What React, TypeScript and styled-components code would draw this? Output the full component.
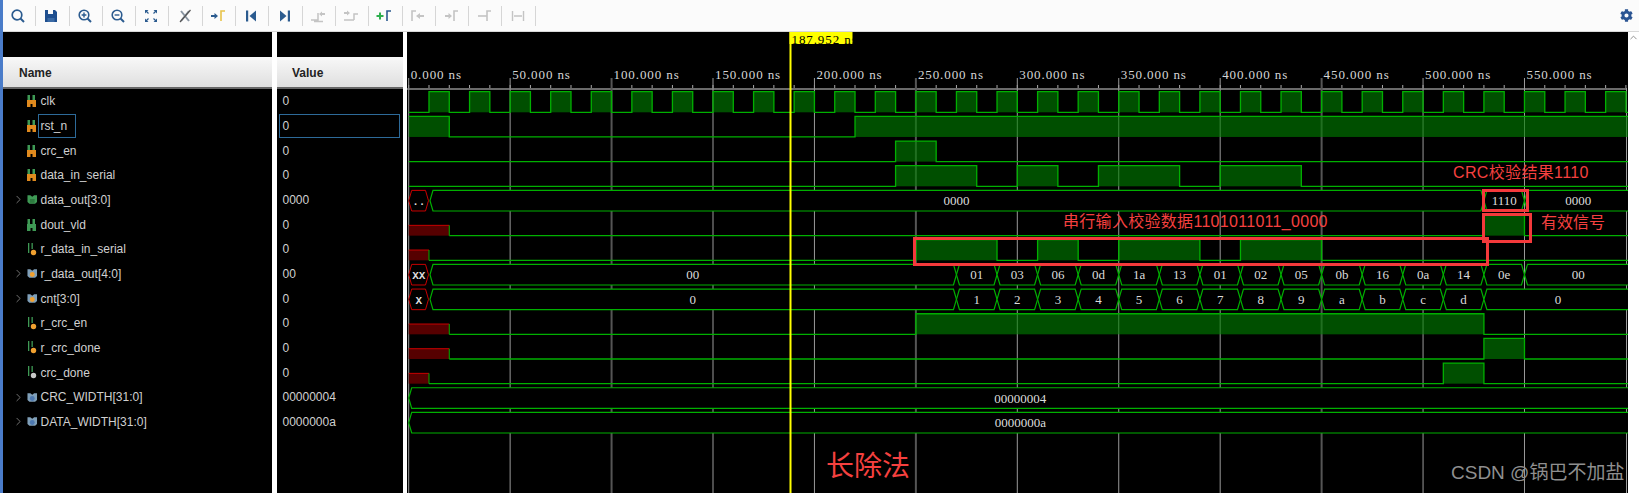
import React from "react";
import styled, {createGlobalStyle} from "styled-components";
import {ChevronRight, ChevronUp} from "lucide-react";
import {FaCog} from "react-icons/fa";

const GlobalStyle = createGlobalStyle`
    html, body {
        margin: 0;
        padding: 0;
        background: #fff;
        overflow: hidden;
    }
    * {
        box-sizing: border-box;
    }
`

const Page = styled.div`
    width: 1639px;
    height: 493px;
    display: flex;
    font-family: "Liberation Sans", Arial, sans-serif;
    overflow: hidden;
`

const BlueStrip = styled.div`
    width: 3px;
    background: #4a7cc9;
`

const Main = styled.div`
    flex: 1;
    display: flex;
    flex-direction: column;
    min-width: 0;
`

const Toolbar = styled.div`
    height: 32px;
    display: flex;
    align-items: center;
    background: #fbfbfb;
    border-bottom: 1px solid #d8d8d8;
`

const ToolButton = styled.div`
    width: 33.3px;
    height: 20px;
    padding-right: 2px;
    border-right: 1px solid #d6d6d6;
    display: flex;
    align-items: center;
    justify-content: center;
`

const GearSlot = styled.div`
    margin-left: auto;
    margin-right: 6px;
    display: flex;
    color: #2b5593;
`

const Body = styled.div`
    flex: 1;
    display: flex;
    min-height: 0;
`

const Column = styled.div<{$width: number}>`
    width: ${p => p.$width}px;
    background: #000;
    flex-shrink: 0;
`

const Gutter = styled.div<{$width: number}>`
    width: ${p => p.$width}px;
    background: #fff;
    flex-shrink: 0;
`

const ColumnTop = styled.div`
    height: 25px;
    background: #000;
`

const ColumnHeader = styled.div<{$indent: number}>`
    height: 32px;
    padding: 1px 0 0 ${p => p.$indent}px;
    display: flex;
    align-items: center;
    font-size: 12px;
    font-weight: 700;
    color: #222;
    background: linear-gradient(#f8f8f8, #dfdfdf);
    border-bottom: 2px solid #666;
`

const NameRow = styled.div`
    height: 24.67px;
    padding-left: 9px;
    display: flex;
    align-items: center;
    font-size: 12px;
    color: #d0d0d0;
`

const ChevronSlot = styled.div`
    width: 15px;
    display: flex;
    align-items: center;
    color: #8a8a8a;
`

const IconSlot = styled.div`
    width: 10.5px;
    display: flex;
`

const NameLabel = styled.div<{$selected?: boolean}>`
    height: 100%;
    display: flex;
    align-items: center;
    padding: 0 ${p => p.$selected ? 8 : 2}px 0 2px;
    border: 1px solid ${p => p.$selected ? '#2d6a99' : 'transparent'};
    white-space: nowrap;
`

const ValueRow = styled.div`
    height: 24.67px;
    padding-left: 2px;
    font-size: 12px;
    color: #d0d0d0;
`

const ValueLabel = styled.div<{$selected?: boolean}>`
    width: 121px;
    height: 100%;
    padding-left: 2.5px;
    display: flex;
    align-items: center;
    border: 1px solid ${p => p.$selected ? '#2d6a99' : 'transparent'};
`

const WavePanel = styled.div`
    position: relative;
    width: 1221px;
    background: #000;
    flex-shrink: 0;
    overflow: hidden;
`

const Scrollbar = styled.div`
    flex: 1;
    display: flex;
    justify-content: center;
    color: #888;
    background: #fff;
`

const RulerText = styled.text`
    font-family: "Liberation Serif", serif;
    font-size: 13px;
    letter-spacing: 0.9px;
    fill: #d6d6d6;
`

const BusText = styled.text<{$bad?: boolean}>`
    font-family: ${p => p.$bad ? '"Liberation Mono", monospace' : '"Liberation Serif", serif'};
    font-size: ${p => p.$bad ? 11 : 13}px;
    font-weight: ${p => p.$bad ? 700 : 400};
    text-anchor: middle;
    fill: #dcdcdc;
`

const CursorText = styled.text`
    font-family: "Liberation Serif", serif;
    font-size: 13px;
    letter-spacing: 0.9px;
    fill: #000;
`

const Note = styled.div<{$x: number; $y: number; $size?: number; $track?: number}>`
    position: absolute;
    left: ${p => p.$x - 407}px;
    top: ${p => p.$y - 32}px;
    font-family: "Liberation Sans", "Noto Sans CJK SC", sans-serif;
    font-size: ${p => p.$size ?? 16}px;
    letter-spacing: ${p => p.$track ?? 0}px;
    line-height: 1;
    color: #f5403f;
    white-space: nowrap;
`

const NoteBox = styled.div<{$x: number; $y: number; $w: number; $h: number}>`
    position: absolute;
    left: ${p => p.$x - 407}px;
    top: ${p => p.$y - 32}px;
    width: ${p => p.$w}px;
    height: ${p => p.$h}px;
    border: 3px solid #f4393b;
`

const Watermark = styled.div`
    position: absolute;
    left: ${1451 - 407}px;
    top: ${463 - 32}px;
    font-family: "Liberation Sans", "Noto Sans CJK SC", sans-serif;
    font-size: 19px;
    line-height: 1.1;
    color: #8f8f8f;
    white-space: nowrap;
`

const blue = '#2b5b8f'
const grey = '#c4c4c4'

const Ico = ({children}: {children: React.ReactNode}) => (
    <svg width="16" height="16" viewBox="0 0 16 16" fill="none">{children}</svg>
)

const Bracket = ({c}: {c: string}) => <path d="M15 3h-4v10" stroke={c} strokeWidth="1.6"/>

const toolIcons = [
    <Ico><circle cx="7" cy="7" r="4.8" stroke={blue} strokeWidth="1.7"/><path d="M10.5 10.5l3.5 3.5" stroke={blue} strokeWidth="2"/></Ico>,
    <Ico><path d="M2 2h10l2 2v10H2z" fill="#1f4f8f"/><path d="M5 2h5v4H5z" fill="#fbfbfb"/><path d="M4.5 10h7v4h-7z" fill="#3a6aa5"/></Ico>,
    <Ico><circle cx="7" cy="7" r="4.8" stroke={blue} strokeWidth="1.6"/><path d="M10.5 10.5l3.5 3.5" stroke={blue} strokeWidth="2"/><path d="M4.6 7h4.8M7 4.6v4.8" stroke={blue} strokeWidth="1.4"/></Ico>,
    <Ico><circle cx="7" cy="7" r="4.8" stroke={blue} strokeWidth="1.6"/><path d="M10.5 10.5l3.5 3.5" stroke={blue} strokeWidth="2"/><path d="M4.6 7h4.8" stroke={blue} strokeWidth="1.4"/></Ico>,
    <Ico><path d="M2 2l3.5 0-3.5 3.5zM14 2v3.5L10.500 2zM2 14v-3.500L5.500 14zM14 14h-3.500L14 10.500z" fill={blue}/><path d="M3 3l2.500 2.500M13 3l-2.500 2.500M3 13l2.500-2.500M13 13l-2.500-2.500" stroke={blue} strokeWidth="1.200"/></Ico>,
    <Ico><path d="M4 3l8 10M12 3l-8 10" stroke="#8a96a3" strokeWidth="2"/><path d="M13.500 2L3 14" stroke="#555" strokeWidth="1.200"/></Ico>,
    <Ico><path d="M1 7h3.500V5l3.500 3-3.500 3V9H1z" fill={blue}/><Bracket c="#e8c34a"/></Ico>,
    <Ico><path d="M3 2.500h2.200v11H3z" fill={blue}/><path d="M13 2.500v11L6.500 8z" fill={blue}/></Ico>,
    <Ico><path d="M10.800 2.500H13v11h-2.200z" fill={blue}/><path d="M3 2.500v11L9.500 8z" fill={blue}/></Ico>,
    <Ico><path d="M1 12h7V5M4 13.500h9" stroke={grey} strokeWidth="1.500"/><path d="M9 6l3-2.500V5h3v2h-3v1.500z" fill={grey}/></Ico>,
    <Ico><path d="M1 12h10M11 12V6h4" stroke={grey} strokeWidth="1.500"/><path d="M7 5L4 2.500V4H1v2h3v1.500z" fill={grey}/></Ico>,
    <Ico><path d="M0.500 8h7M4 4.500v7" stroke="#2eb04e" strokeWidth="2"/><Bracket c={blue}/></Ico>,
    <Ico><path d="M6 3H2v10" stroke={grey} strokeWidth="1.600"/><path d="M6 8l4-3v2h4v2h-4v2z" fill={grey}/></Ico>,
    <Ico><path d="M2 7h3.500V5L9 8l-3.500 3V9H2z" fill={grey}/><Bracket c={grey}/></Ico>,
    <Ico><path d="M2 8h9" stroke={grey} strokeWidth="1.600"/><Bracket c={grey}/></Ico>,
    <Ico><path d="M2.500 3v10M13.500 3v10M4 8h8" stroke={grey} strokeWidth="1.400"/></Ico>,
]

type IconKind = 'in' | 'out' | 'reg' | 'wire' | 'busOut' | 'busReg' | 'param'

const SignalIcon = ({kind}: {kind: IconKind}) => {
    const bus = kind === 'busOut' || kind === 'busReg' || kind === 'param'
    const dot = kind === 'wire' ? '#c8c8c8' : '#f0a030'
    if (bus) {
        const body = kind === 'busOut' ? '#3f9a55' : '#7f9fb8'
        return (
            <svg width="11" height="11" viewBox="0 0 11 11">
                <path d="M0.500 1h3l2 1.500L7.500 1h3v7l-2 2h-6l-2-2z" fill={body}/>
                {kind === 'busOut' && <path d="M3 5h5v4H3z" fill="#2d7a3f"/>}
                {kind === 'busReg' && <circle cx="5.500" cy="6.500" r="2.600" fill={dot}/>}
                {kind === 'param' && <circle cx="5.500" cy="6.500" r="2.600" fill="#4d78b0"/>}
            </svg>
        )
    }
    if (kind === 'in' || kind === 'out') {
        const low = kind === 'in' ? '#e08a1e' : '#3f9a55'
        return (
            <svg width="9" height="12" viewBox="0 0 9 12">
                <path d="M0.500 0h2.500v5H0.500zM5.500 0H8v5H5.500z" fill="#3f9a55"/>
                <path d="M0 5h9v7H5.500V9h-2v3H0z" fill={low}/>
            </svg>
        )
    }
    return (
        <svg width="10" height="13" viewBox="0 0 10 13">
            <path d="M1 0h1.300v10H1zM4.500 0h1.300v6H4.500z" fill="#3f9a55"/>
            <circle cx="6.500" cy="9.500" r="2.700" fill={dot}/>
        </svg>
    )
}

type Wave =
    | {type: 'bit'; unknownTo?: number; high: Array<[number, number]>}
    | {type: 'bus'; unknown?: string; parts: Array<[number, number, string]>}
    | {type: 'clk'}

interface Signal {
    name: string;
    value: string;
    icon: IconKind;
    expand?: boolean;
    selected?: boolean;
    wave: Wave;
}

const T_END = 603
const seq = (labels: string[], from: number): Array<[number, number, string]> =>
    labels.map((l, i) => [from + i * 20, from + (i + 1) * 20, l])

const signals: Signal[] = [
    {name: 'clk', value: '0', icon: 'in', wave: {type: 'clk'}},
    {name: 'rst_n', value: '0', icon: 'in', selected: true, wave: {type: 'bit', high: [[0, 20], [220, T_END]]}},
    {name: 'crc_en', value: '0', icon: 'in', wave: {type: 'bit', high: [[240, 260]]}},
    {name: 'data_in_serial', value: '0', icon: 'in', wave: {type: 'bit', high: [[240, 280], [300, 320], [340, 380], [400, 440]]}},
    {name: 'data_out[3:0]', value: '0000', icon: 'busOut', expand: true, wave: {type: 'bus', unknown: '..', parts: [[10, 530, '0000'], [530, 550, '1110'], [550, T_END, '0000']]}},
    {name: 'dout_vld', value: '0', icon: 'out', wave: {type: 'bit', unknownTo: 20, high: [[530, 550]]}},
    {name: 'r_data_in_serial', value: '0', icon: 'reg', wave: {type: 'bit', unknownTo: 10, high: [[250, 290], [310, 330], [350, 390], [410, 450]]}},
    {
        name: 'r_data_out[4:0]', value: '00', icon: 'busReg', expand: true, wave: {
            type: 'bus', unknown: 'XX',
            parts: [[10, 270, '00'], ...seq(['01', '03', '06', '0d', '1a', '13', '01', '02', '05', '0b', '16', '0a', '14', '0e'], 270), [550, T_END, '00']],
        }
    },
    {
        name: 'cnt[3:0]', value: '0', icon: 'busReg', expand: true, wave: {
            type: 'bus', unknown: 'X',
            parts: [[10, 270, '0'], ...seq(['1', '2', '3', '4', '5', '6', '7', '8', '9', 'a', 'b', 'c', 'd'], 270), [530, T_END, '0']],
        }
    },
    {name: 'r_crc_en', value: '0', icon: 'reg', wave: {type: 'bit', unknownTo: 20, high: [[250, 530]]}},
    {name: 'r_crc_done', value: '0', icon: 'reg', wave: {type: 'bit', unknownTo: 20, high: [[530, 550]]}},
    {name: 'crc_done', value: '0', icon: 'wire', wave: {type: 'bit', unknownTo: 10, high: [[510, 530]]}},
    {name: 'CRC_WIDTH[31:0]', value: '00000004', icon: 'param', expand: true, wave: {type: 'bus', parts: [[0, T_END, '00000004']]}},
    {name: 'DATA_WIDTH[31:0]', value: '0000000a', icon: 'param', expand: true, wave: {type: 'bus', parts: [[0, T_END, '0000000a']]}},
]

const tx = (t: number) => 408.7 + 2.0287 * t
const rowTop = (i: number) => 91.7 + 24.67 * i
const ROW_H = 20.6

const GREEN = '#00b000'
const RED = '#c80000'

const BitWave = ({row, unknownTo = 0, high}: {row: number; unknownTo?: number; high: Array<[number, number]>}) => {
    const top = rowTop(row)
    const low = top + ROW_H
    const mid = top + ROW_H / 2
    let d = `M${tx(unknownTo)} ${low}`
    let cur = unknownTo
    high.forEach(([a, b]) => {
        if (a > cur) d += `L${tx(a)} ${low}`
        d += a > cur ? `L${tx(a)} ${top}` : `M${tx(a)} ${top}`
        d += `L${tx(b)} ${top}`
        if (b < T_END) d += `L${tx(b)} ${low}`
        cur = b
    })
    if (cur < T_END) d += `L${tx(T_END)} ${low}`
    return (
        <g>
            {high.map(([a, b]) => (
                <rect key={a} x={tx(a)} y={top} width={tx(b) - tx(a)} height={ROW_H} fill="#008000" fillOpacity={0.62}/>
            ))}
            {unknownTo > 0 && (
                <>
                    <rect x={tx(0)} y={mid} width={tx(unknownTo) - tx(0)} height={ROW_H / 2} fill="#560000"/>
                    <path d={`M${tx(0)} ${mid}H${tx(unknownTo)}`} stroke={RED} strokeWidth={1}/>
                    <path d={`M${tx(unknownTo)} ${mid}V${low}`} stroke={GREEN} strokeWidth={1}/>
                </>
            )}
            <path d={d} stroke={GREEN} strokeWidth={1.3} fill="none"/>
        </g>
    )
}

const hex = (a: number, b: number, top: number) => {
    const low = top + ROW_H
    const mid = top + ROW_H / 2
    return `M${a} ${mid}L${a + 3} ${top}H${b - 3}L${b} ${mid}L${b - 3} ${low}H${a + 3}Z`
}

const BusWave = ({row, unknown, parts}: {row: number; unknown?: string; parts: Array<[number, number, string]>}) => {
    const top = rowTop(row)
    const textY = top + ROW_H / 2 + 4.5
    return (
        <g>
            {unknown && (
                <>
                    <path d={hex(tx(0), tx(10) - 0.5, top)} stroke={RED} strokeWidth={1} fill="#000"/>
                    <BusText $bad x={(tx(0) + tx(10)) / 2} y={textY}>{unknown}</BusText>
                </>
            )}
            {parts.map(([a, b, label]) => (
                <g key={a}>
                    <path d={hex(tx(a) + (unknown && a === 10 ? 1 : 0), tx(b), top)} stroke={GREEN} strokeWidth={1.2} fill="#000"/>
                    <BusText x={(tx(a) + tx(b)) / 2} y={textY}>{label}</BusText>
                </g>
            ))}
        </g>
    )
}

const ClockWave = () => {
    const high: Array<[number, number]> = []
    for (let t = 10; t < T_END; t += 20) {
        high.push([t, Math.min(t + 10, T_END)])
    }
    return <BitWave row={0} high={high}/>
}

const rulerMarks = Array.from({length: 12}, (_, i) => i * 50)
const ticks = Array.from({length: 61}, (_, i) => i * 10)
const heavyMarks = [100, 250, 450]
const CURSOR_X = 790.5

const Waveform = () => (
    <svg width="1221" height="461" viewBox="407 32 1221 461">
        <rect x="407" y="88" width="1220" height="2" fill="#6a6a6a"/>
        {ticks.map(t => <path key={t} d={`M${tx(t)} 85V88`} stroke="#a8a8a8" strokeWidth={1}/>)}
        {rulerMarks.map(t => (
            <g key={t}>
                <path
                    d={`M${tx(t)} 78V493`}
                    stroke={heavyMarks.includes(t) ? '#555' : '#9a9a9a'}
                    strokeWidth={heavyMarks.includes(t) ? 2 : 1}
                />
                <RulerText x={tx(t) + 2} y={79}>{t}.000 ns</RulerText>
            </g>
        ))}
        <path d="M1626.500 88V493" stroke="#9a9a9a" strokeWidth={1}/>

        {signals.map((s, i) => {
            if (s.wave.type === 'clk') return <ClockWave key={s.name}/>
            if (s.wave.type === 'bit') return <BitWave key={s.name} row={i} unknownTo={s.wave.unknownTo} high={s.wave.high}/>
            return <BusWave key={s.name} row={i} unknown={s.wave.unknown} parts={s.wave.parts}/>
        })}

        <path d={`M${CURSOR_X} 32V493`} stroke="#ffff00" strokeWidth={2}/>
        <rect x={CURSOR_X - 1} y="32" width="63" height="12" fill="#ffff00"/>
        <svg x={CURSOR_X - 1} y="32" width="63" height="12" viewBox="0 0 63 12">
            <CursorText x={2} y={12}>187.952 ns</CursorText>
        </svg>
    </svg>
)

export default function App() {
    return (
        <>
            <GlobalStyle/>
            <Page>
                <BlueStrip/>
                <Main>
                    <Toolbar>
                        {toolIcons.map((icon, i) => <ToolButton key={i}>{icon}</ToolButton>)}
                        <GearSlot><FaCog size={13}/></GearSlot>
                    </Toolbar>
                    <Body>
                        <Column $width={269}>
                            <ColumnTop/>
                            <ColumnHeader $indent={16}>Name</ColumnHeader>
                            {signals.map(s => (
                                <NameRow key={s.name}>
                                    <ChevronSlot>{s.expand && <ChevronRight size={13} strokeWidth={1.5}/>}</ChevronSlot>
                                    <IconSlot><SignalIcon kind={s.icon}/></IconSlot>
                                    <NameLabel $selected={s.selected}>{s.name}</NameLabel>
                                </NameRow>
                            ))}
                        </Column>
                        <Gutter $width={5}/>
                        <Column $width={126}>
                            <ColumnTop/>
                            <ColumnHeader $indent={15}>Value</ColumnHeader>
                            {signals.map(s => (
                                <ValueRow key={s.name}>
                                    <ValueLabel $selected={s.selected}>{s.value}</ValueLabel>
                                </ValueRow>
                            ))}
                        </Column>
                        <Gutter $width={4}/>
                        <WavePanel>
                            <Waveform/>
                            <NoteBox $x={913} $y={237} $w={576} $h={29}/>
                            <NoteBox $x={1482} $y={189} $w={47} $h={23}/>
                            <NoteBox $x={1482} $y={213} $w={50} $h={30}/>
                            <Note $x={1453} $y={165} $track={0.35}>CRC校验结果1110</Note>
                            <Note $x={1063} $y={214} $track={0.3}>串行输入校验数据1101011011_0000</Note>
                            <Note $x={1541} $y={215}>有效信号</Note>
                            <Note $x={826} $y={453} $size={28}>长除法</Note>
                            <Watermark>CSDN @锅巴不加盐</Watermark>
                        </WavePanel>
                        <Scrollbar><ChevronUp size={11} strokeWidth={2}/></Scrollbar>
                    </Body>
                </Main>
            </Page>
        </>
    );
}
